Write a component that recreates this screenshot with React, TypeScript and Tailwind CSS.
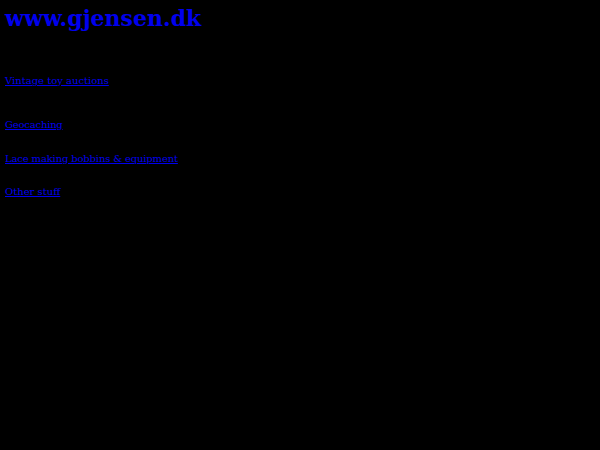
export default function App() {
  return (
    <div className="min-h-[450px] bg-black px-[5px] pt-[5px] font-['DejaVu_Serif',serif] text-[#0000ee]">
      <h1 className="text-[22px] font-bold leading-[26px]">www.gjensen.dk</h1>
      <div className="mt-[43px] text-[10px] leading-[14px]">
        <p>
          <a href="#" className="underline">Vintage toy auctions</a>
        </p>
        <p className="mt-[30px]">
          <a href="#" className="underline tracking-[-0.2px]">Geocaching</a>
        </p>
        <p className="mt-[20px]">
          <a href="#" className="underline tracking-[-0.15px]">Lace making bobbins &amp; equipment</a>
        </p>
        <p className="mt-[19px]">
          <a href="#" className="underline">Other stuff</a>
        </p>
      </div>
    </div>
  );
}
